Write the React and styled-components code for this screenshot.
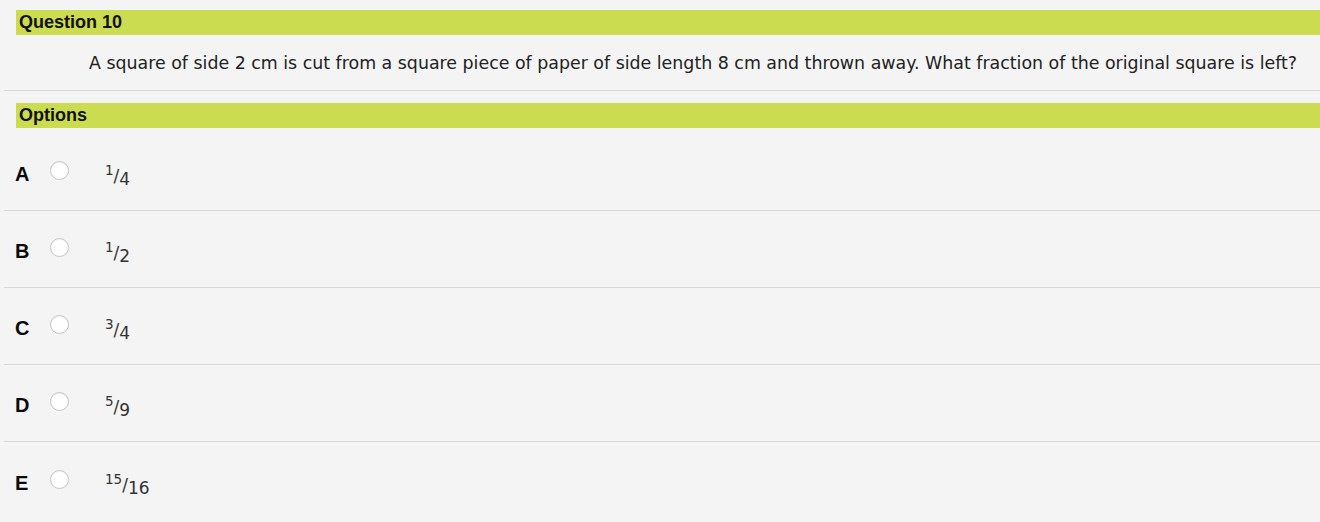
import React from "react";
import styled, { createGlobalStyle } from "styled-components";

const GlobalStyle = createGlobalStyle`
  html, body {
    margin: 0;
    padding: 0;
    background: #f4f4f4;
  }
`;

const Page = styled.div`
  padding-top: 10px;
  background: #f4f4f4;
  min-height: 522px;
`;

const SectionBar = styled.div`
  margin-left: 16px;
  height: 25px;
  background: #cbdc51;
  display: flex;
  align-items: center;
  padding-left: 3px;
  font-family: "Liberation Sans", Arial, sans-serif;
  font-weight: bold;
  font-size: 18px;
  color: #111;
`;

const QuestionText = styled.p`
  margin: 0 0 12px 4px;
  height: 55px;
  padding-left: 85px;
  display: flex;
  align-items: center;
  font-family: "DejaVu Sans", Verdana, sans-serif;
  font-size: 17.4px;
  color: #222;
  border-bottom: 1px solid #d8d8d8;
`;

const OptionList = styled.div`
  padding-top: 6px;
`;

const OptionRow = styled.label`
  display: flex;
  align-items: center;
  height: 77px;
  margin-left: 4px;
  padding-left: 11px;
  border-bottom: ${(p) => (p.last ? "none" : "1px solid #d8d8d8")};
  box-sizing: border-box;
`;

const Letter = styled.span`
  width: 35px;
  font-family: "Liberation Sans", Arial, sans-serif;
  font-weight: bold;
  font-size: 20px;
  color: #0a0a0a;
  margin-top: 5px;
`;

const Radio = styled.span`
  width: 19px;
  height: 19px;
  border-radius: 50%;
  background: #fff;
  border: 1px solid #c4c4c4;
  box-sizing: border-box;
  box-shadow: inset 0 1px 1px rgba(0, 0, 0, 0.06);
  margin-top: -3px;
`;

const Fraction = styled.span`
  margin-left: 36px;
  margin-top: 8px;
  font-family: "DejaVu Sans", Verdana, sans-serif;
  font-size: 17px;
  color: #333;

  sup {
    font-size: 13.5px;
    vertical-align: 7px;
    line-height: 0;
  }

  sub {
    font-size: 17px;
    vertical-align: -3px;
    line-height: 0;
  }
`;

const options = [
  { key: "A", num: "1", den: "4" },
  { key: "B", num: "1", den: "2" },
  { key: "C", num: "3", den: "4" },
  { key: "D", num: "5", den: "9" },
  { key: "E", num: "15", den: "16" },
];

export default function App() {
  return (
    <Page>
      <GlobalStyle />
      <SectionBar>Question 10</SectionBar>
      <QuestionText>
        A square of side 2 cm is cut from a square piece of paper of side length 8 cm and thrown away. What fraction of the original square is left?
      </QuestionText>
      <SectionBar>Options</SectionBar>
      <OptionList>
        {options.map((o, i) => (
          <OptionRow key={o.key} last={i === options.length - 1}>
            <Letter>{o.key}</Letter>
            <Radio />
            <Fraction>
              <sup>{o.num}</sup>/<sub>{o.den}</sub>
            </Fraction>
          </OptionRow>
        ))}
      </OptionList>
    </Page>
  );
}
